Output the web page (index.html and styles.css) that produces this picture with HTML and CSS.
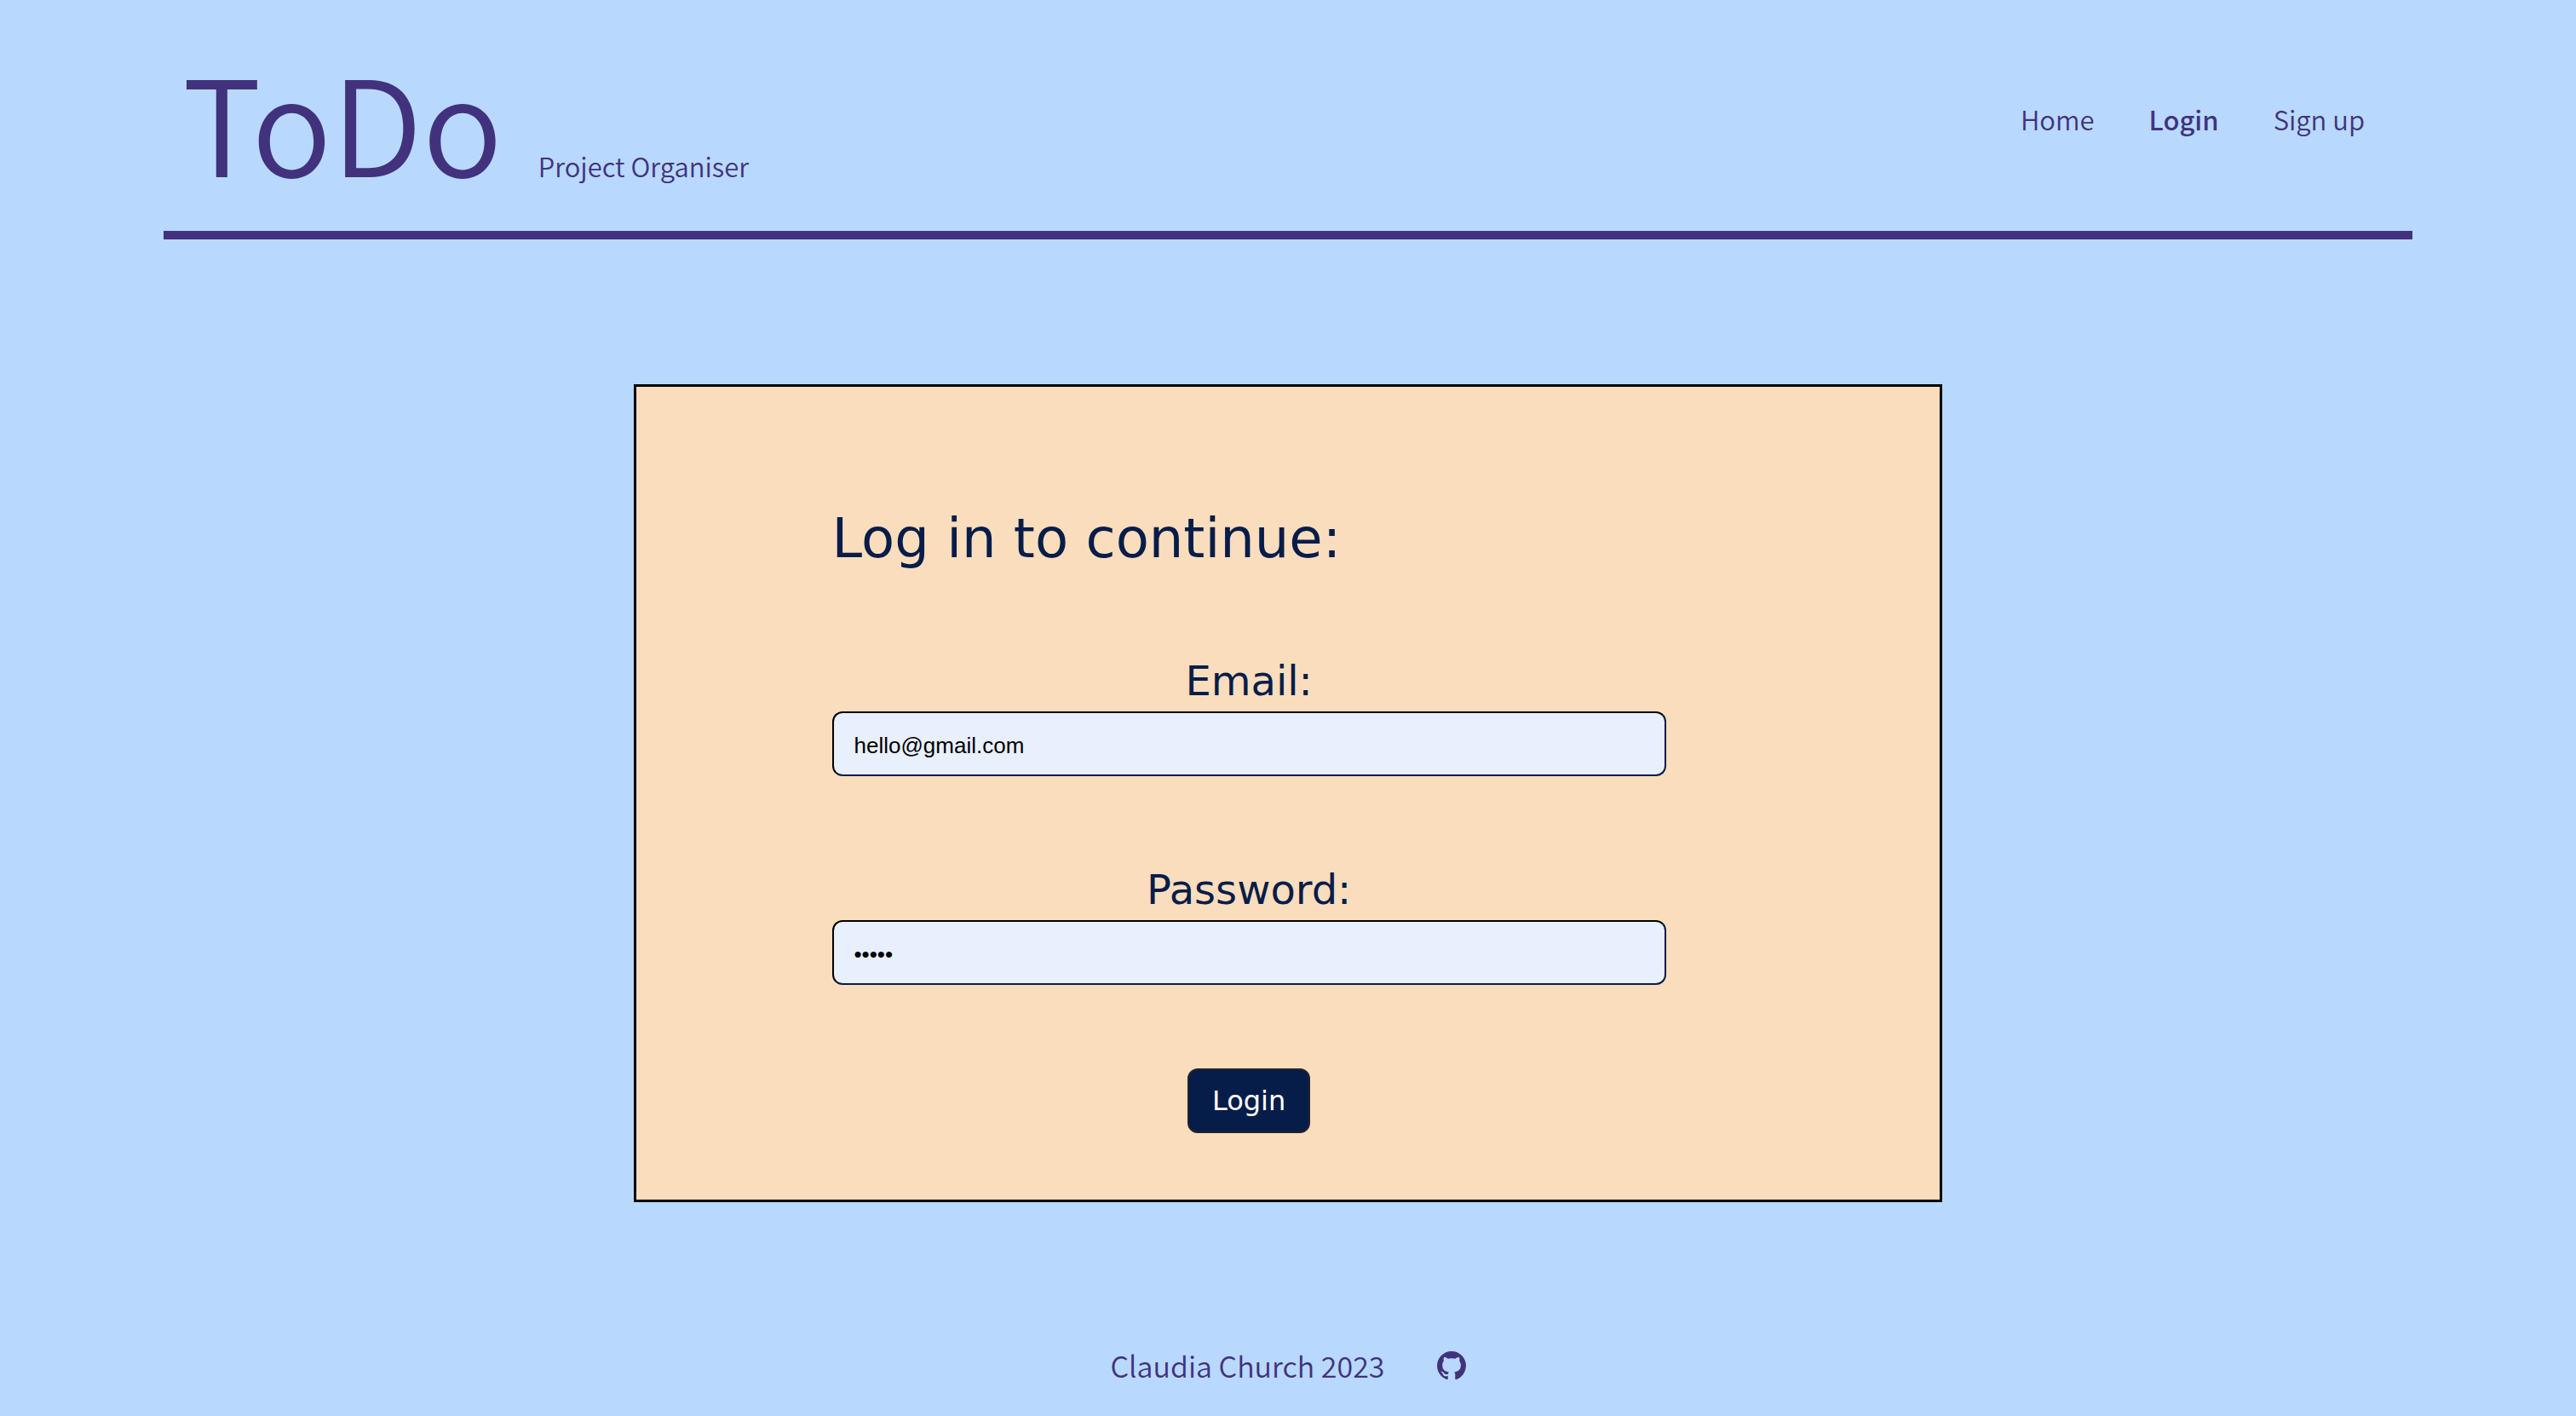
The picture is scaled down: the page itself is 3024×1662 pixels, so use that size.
FILE: index.html
```html
<!DOCTYPE html>
<html lang="en">
<head>
  <meta charset="utf-8">
  <meta name="viewport" content="width=device-width, initial-scale=1">
  <title>ToDo - Login</title>
  <link rel="stylesheet" href="styles.css">
</head>
<body>
  <header class="header">
    <div class="brand">
      <h1 class="logo">ToDo</h1>
      <p class="tagline">Project Organiser</p>
    </div>
    <nav class="nav">
      <a class="nav-link" href="#home">Home</a>
      <a class="nav-link active" href="#login">Login</a>
      <a class="nav-link" href="#signup">Sign up</a>
    </nav>
  </header>
  <main class="main">
    <section class="card">
      <form class="form">
        <h2 class="title">Log in to continue:</h2>
        <div class="field">
          <label class="label" for="email">Email:</label>
          <input class="input" id="email" type="email" value="hello@gmail.com">
        </div>
        <div class="field">
          <label class="label" for="password">Password:</label>
          <input class="input" id="password" type="password" value="hello">
        </div>
        <button class="button" type="submit">Login</button>
      </form>
    </section>
  </main>
  <footer class="footer">
    <span>Claudia Church 2023</span>
    <a class="github" href="#github" aria-label="GitHub">
      <svg class="github-icon" viewBox="0 0 16 16" aria-hidden="true"><path fill="currentColor" d="M8 0C3.58 0 0 3.58 0 8c0 3.54 2.29 6.53 5.47 7.59.4.07.55-.17.55-.38 0-.19-.01-.82-.01-1.49-2.01.37-2.53-.49-2.69-.94-.09-.23-.48-.94-.82-1.13-.28-.15-.68-.52-.01-.53.63-.01 1.08.58 1.23.82.72 1.21 1.87.87 2.33.66.07-.52.28-.87.51-1.07-1.78-.2-3.64-.89-3.64-3.95 0-.87.31-1.59.82-2.15-.08-.2-.36-1.02.08-2.12 0 0 .67-.21 2.2.82.64-.18 1.32-.27 2-.27s1.36.09 2 .27c1.53-1.04 2.2-.82 2.2-.82.44 1.1.16 1.92.08 2.12.51.56.82 1.27.82 2.15 0 3.07-1.87 3.75-3.65 3.95.29.25.54.73.54 1.48 0 1.07-.01 1.93-.01 2.2 0 .21.15.46.55.38A8.01 8.01 0 0 0 16 8c0-4.42-3.58-8-8-8z"/></svg>
    </a>
  </footer>
</body>
</html>
```
FILE: styles.css
```css
* {
  box-sizing: border-box;
}

body {
  margin: 0;
  padding: 0 192px;
  min-height: 100vh;
  background: #b8d9fd;
  color: #42327d;
  font: 350 31px/48px "Noto Sans CJK SC", "Noto Sans", sans-serif;
}

h1, h2, p {
  margin: 0;
  font-weight: inherit;
}

a {
  color: inherit;
  text-decoration: none;
}

.header {
  display: flex;
  justify-content: space-between;
  align-items: flex-start;
  padding: 60px 56px 51px 22px;
  border-bottom: 10px solid #42327d;
}

.brand {
  display: flex;
  align-items: baseline;
  gap: 42px;
}

.logo {
  font-size: 156px;
  line-height: 160px;
}

.nav {
  display: flex;
  gap: 64px;
  padding-top: 56px;
}

.active {
  font-weight: 500;
}

.main {
  padding: 170px 0 168px;
}

.card {
  max-width: 1536px;
  margin: 0 auto;
  padding: 138px 0 78px;
  border: 3px solid #000;
  background: #faddbd;
  color: #071d49;
  font-family: "DejaVu Sans", sans-serif;
  font-weight: 400;
}

.form {
  display: flex;
  flex-direction: column;
  align-items: center;
  width: 64%;
  margin-left: 15%;
}

.title {
  align-self: flex-start;
  margin-bottom: 97px;
  font-size: 64px;
  line-height: 80px;
}

.field {
  display: flex;
  flex-direction: column;
  gap: 6px;
  width: 100%;
  margin-bottom: 103px;
}

.field:last-of-type {
  margin-bottom: 98px;
}

.label {
  font-size: 48px;
  line-height: 60px;
  text-align: center;
}

.input {
  width: 100%;
  height: 76px;
  padding: 4px 24px 0;
  border: 2px solid;
  border-color: #000 #071d49 #071d49 #000;
  border-radius: 12px;
  background: #e8effd;
  color: #000;
  font: 26px "Liberation Sans", sans-serif;
}

.button {
  height: 76px;
  padding: 0 27px;
  border: 2px solid #222428;
  border-radius: 12px;
  background: #071d49;
  color: #fff;
  font: 32px "DejaVu Sans", sans-serif;
}

.footer {
  display: flex;
  justify-content: center;
  align-items: center;
  gap: 61px;
  padding-bottom: 36px;
  font-size: 34px;
}

.github {
  display: flex;
}

.github-icon {
  width: 34px;
  height: 34px;
}
```
